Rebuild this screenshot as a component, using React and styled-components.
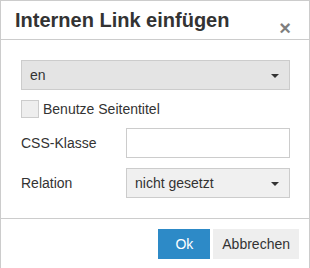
import React from "react";
import styled, { createGlobalStyle } from "styled-components";

const Global = createGlobalStyle`
  html, body { margin: 0; padding: 0; background: #fff; }
  body { font-family: "Liberation Sans", Arial, sans-serif; font-size: 14px; color: #333; }
  * { box-sizing: border-box; }
`;

const Dialog = styled.div`
  width: 310px;
  border: 1px solid #cccccc;
  border-bottom: 0;
  background: #fff;
  display: flex;
  flex-direction: column;
`;

const Header = styled.div`
  height: 39px;
  border-bottom: 1px solid #cccccc;
  display: flex;
  align-items: flex-start;
  justify-content: space-between;
  padding: 0 18px 0 14px;
`;

const Title = styled.h4`
  margin: 7px 0 0;
  font-size: 20px;
  font-weight: bold;
  color: #333;
  line-height: 24px;
`;

const Close = styled.button`
  border: 0;
  background: none;
  padding: 0;
  margin-top: 17px;
  font-family: "Liberation Sans", Arial, sans-serif;
  font-size: 20px;
  font-weight: bold;
  line-height: 20px;
  color: #000;
  opacity: 0.5;
  cursor: pointer;
`;

const Body = styled.div`
  padding: 20px 19px 20px 20px;
  display: flex;
  flex-direction: column;
  gap: 10px;
  border-bottom: 1px solid #cccccc;
`;

const SelectBox = styled.div`
  position: relative;
  height: 30px;
  background: ${(p) => p.$bg};
  border: 1px solid #cccccc;
  display: flex;
  align-items: center;
  padding: 0 8px;
  font-size: 14px;
  color: #333;
`;

const Caret = styled.span`
  position: absolute;
  right: 10px;
  top: 13px;
  width: 0;
  height: 0;
  border-left: 4px solid transparent;
  border-right: 4px solid transparent;
  border-top: 4px solid #333;
`;

const CheckRow = styled.label`
  display: flex;
  align-items: center;
  gap: 4px;
  height: 18px;
  font-size: 14px;
`;

const CheckBox = styled.span`
  width: 18px;
  height: 18px;
  background: #eeeeee;
  border: 1px solid #cccccc;
`;

const FieldRow = styled.div`
  display: grid;
  grid-template-columns: 105px 1fr;
  align-items: center;
`;

const Label = styled.span`
  font-size: 14px;
  color: #333;
`;

const Input = styled.div`
  height: 30px;
  border: 1px solid #cccccc;
  background: #fff;
`;

const Footer = styled.div`
  padding: 10px 10px 9px;
  display: flex;
  justify-content: flex-end;
  gap: 3px;
`;

const Button = styled.button`
  height: 30px;
  border: 0;
  padding: 0 ${(p) => p.$pad}px;
  background: ${(p) => (p.$primary ? "#2d8ac7" : "#eeeeee")};
  color: ${(p) => (p.$primary ? "#fff" : "#333")};
  font-family: "Liberation Sans", Arial, sans-serif;
  font-size: 14px;
  cursor: pointer;
`;

export default function App() {
  return (
    <>
      <Global />
      <Dialog>
        <Header>
          <Title>Internen Link einfügen</Title>
          <Close aria-label="Schließen">×</Close>
        </Header>
        <Body>
          <SelectBox $bg="#e4e4e4">
            en
            <Caret />
          </SelectBox>
          <CheckRow>
            <CheckBox />
            Benutze Seitentitel
          </CheckRow>
          <FieldRow>
            <Label>CSS-Klasse</Label>
            <Input />
          </FieldRow>
          <FieldRow>
            <Label>Relation</Label>
            <SelectBox $bg="#f0f0f0">
              nicht gesetzt
              <Caret />
            </SelectBox>
          </FieldRow>
        </Body>
        <Footer>
          <Button $primary $pad={17}>Ok</Button>
          <Button $pad={9}>Abbrechen</Button>
        </Footer>
      </Dialog>
    </>
  );
}
